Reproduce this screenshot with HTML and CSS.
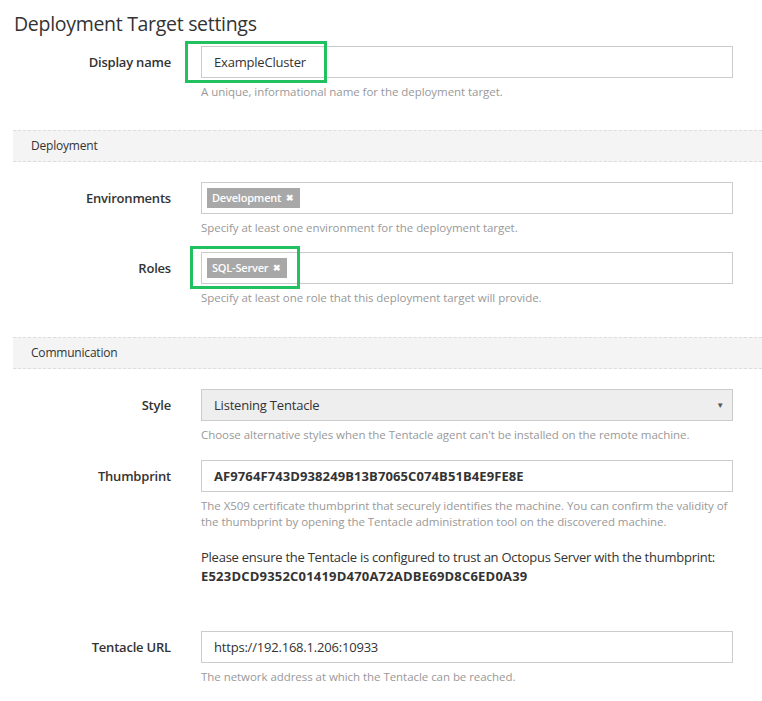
FILE: index.html
```html
<!DOCTYPE html>
<html>
<head>
<meta charset="utf-8">
<link rel="stylesheet" href="styles.css">
</head>
<body>
<div class="page">
  <h1 class="title">Deployment Target settings</h1>

  <div class="field first">
    <label class="label">Display name</label>
    <div class="control">
      <div class="input">ExampleCluster</div>
      <div class="help">A unique, informational name for the deployment target.</div>
    </div>
  </div>

  <div class="band">Deployment</div>

  <div class="field">
    <label class="label">Environments</label>
    <div class="control">
      <div class="input chips"><span class="chip">Development <span class="x">✖</span></span></div>
      <div class="help">Specify at least one environment for the deployment target.</div>
    </div>
  </div>

  <div class="field">
    <label class="label">Roles</label>
    <div class="control">
      <div class="input chips"><span class="chip">SQL-Server <span class="x">✖</span></span></div>
      <div class="help">Specify at least one role that this deployment target will provide.</div>
    </div>
  </div>

  <div class="band band2">Communication</div>

  <div class="field style">
    <label class="label">Style</label>
    <div class="control">
      <div class="input select"><span>Listening Tentacle</span><span class="arrow">▼</span></div>
      <div class="help">Choose alternative styles when the Tentacle agent can't be installed on the remote machine.</div>
    </div>
  </div>

  <div class="field">
    <label class="label">Thumbprint</label>
    <div class="control">
      <div class="input bold">AF9764F743D938249B13B7065C074B51B4E9FE8E</div>
      <div class="help">The X509 certificate thumbprint that securely identifies the machine. You can confirm the validity of the thumbprint by opening the Tentacle administration tool on the discovered machine.</div>
      <p class="note">Please ensure the Tentacle is configured to trust an Octopus Server with the thumbprint:<br><strong>E523DCD9352C01419D470A72ADBE69D8C6ED0A39</strong></p>
    </div>
  </div>

  <div class="field url">
    <label class="label">Tentacle URL</label>
    <div class="control">
      <div class="input">https://192.168.1.206:10933</div>
      <div class="help">The network address at which the Tentacle can be reached.</div>
    </div>
  </div>

  <div class="highlight hl-name"></div>
  <div class="highlight hl-roles"></div>
</div>
</body>
</html>
```

FILE: styles.css
```css
* { box-sizing: border-box; }
html, body { margin: 0; padding: 0; background: #fff; }
body {
  font-family: "Open Sans", "Noto Sans", sans-serif;
  color: #333;
  width: 762px;
  height: 701px;
  overflow: hidden;
}
.page {
  position: relative;
  padding: 0 0 0 13px;
}
.title {
  margin: 0;
  padding: 10px 0 0 1px;
  height: 46px;
  font-size: 19.5px;
  font-weight: 400;
  letter-spacing: -0.3px;
  color: #333;
  line-height: 28px;
}
.field {
  display: grid;
  grid-template-columns: 158px 532px;
  column-gap: 30px;
  margin-bottom: 16px;
}
.field.style { margin-bottom: 17px; }
.label {
  text-align: right;
  font-size: 13px;
  font-weight: 600;
  letter-spacing: -0.2px;
  line-height: 32px;
  height: 32px;
  color: #333;
}
.input {
  height: 32px;
  border: 1px solid #ccc;
  padding: 0 12px;
  font-size: 13px;
  line-height: 30px;
  letter-spacing: -0.2px;
  color: #333;
  background: #fff;
}
.input.bold { font-weight: 700; letter-spacing: 0.1px; }
.input.chips { padding: 0 5px; display: flex; align-items: center; }
.chip {
  display: inline-flex;
  align-items: center;
  height: 20px;
  padding: 0 6px 0 5px;
  background: #a8a8a8;
  color: #fff;
  font-size: 11px;
  font-weight: 600;
  letter-spacing: -0.2px;
  line-height: 20px;
}
.chip .x { font-size: 9px; margin-left: 5px; }
.select {
  background: #eeeeee;
  display: flex;
  justify-content: space-between;
  align-items: center;
}
.select .arrow { font-size: 8px; color: #555; margin-right: -4px; }
.help {
  margin-top: 6px;
  font-size: 11.5px;
  line-height: 16px;
  letter-spacing: -0.05px;
  color: #999;
}
.note {
  margin: 18px 0 0 0;
  font-size: 13px;
  line-height: 19px;
  letter-spacing: -0.25px;
  color: #333;
}
.note strong { font-weight: 700; letter-spacing: 0.2px; }
.band {
  margin: 30px 0 20px 0;
  height: 32px;
  border-top: 1px dashed #ddd;
  border-bottom: 1px dashed #ddd;
  background: #f4f4f4;
  padding-left: 18px;
  font-size: 12px;
  line-height: 30px;
  letter-spacing: -0.2px;
  color: #333;
}
.band2 { margin-top: 31px; }
.url { margin-top: 45px; }
.highlight {
  position: absolute;
  border: 3px solid #21c160;
}
.hl-name { left: 185px; top: 41px; width: 142px; height: 42px; }
.hl-roles { left: 190px; top: 246px; width: 110px; height: 43px; }
```
